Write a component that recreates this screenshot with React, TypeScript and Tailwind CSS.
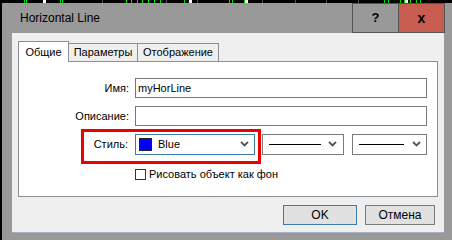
import React from "react";

const font = { fontFamily: '"Liberation Sans", Arial, sans-serif' };

function Chevron() {
  return (
    <svg width="9" height="6" viewBox="0 0 9 6" className="block">
      <path d="M1 1 L4.5 4.5 L8 1" stroke="#555" strokeWidth="1.8" fill="none" />
    </svg>
  );
}

function TopStrip() {
  const greens = [24, 26, 60, 62, 126, 131, 137, 142, 148, 154, 160, 184, 229, 232, 244, 384, 388, 400, 404, 410, 416, 420];
  const whites = [43, 189, 245, 405];
  const grays = [102, 166, 197, 262, 295, 326, 358];
  return (
    <svg width="452" height="3" className="block">
      <rect width="452" height="3" fill="#000" />
      {grays.map((x) => (
        <rect key={"g" + x} x={x} y={0} width={1} height={3} fill="#555" />
      ))}
      {greens.map((x) => (
        <rect key={"n" + x} x={x} y={0} width={1} height={3} fill="#00e000" />
      ))}
      {whites.map((x) => (
        <rect key={"w" + x} x={x} y={0} width={3} height={3} fill="#fff" />
      ))}
    </svg>
  );
}

export default function App() {
  return (
    <div className="w-[452px] h-[240px] overflow-hidden flex flex-col bg-[#999999] text-black" style={font}>
      <TopStrip />
      <div className="flex flex-1">
        <div className="w-[2px] bg-black" />
        <div className="flex-1 flex flex-col">
          {/* Title bar */}
          <div className="h-[30px] flex items-center">
            <div className="flex-1 pl-[18px] text-[12px]">Horizontal Line</div>
            <div className="w-[47px] h-[30px] border border-[#555] bg-[#999999] flex items-center justify-center text-[13px] font-bold">?</div>
            <div className="w-[46px] h-[30px] border border-[#555] border-l-0 bg-[#c75d51] flex items-center justify-center text-[14px] font-bold">x</div>
            <div className="w-[7px]" />
          </div>
          {/* Client area */}
          <div className="ml-[10px] w-[432px] h-[200px] bg-[#efefef] border-b border-[#a7b0c0] flex flex-col relative">
            {/* Tabs */}
            <div className="flex items-end pl-[6px] pt-[7px] h-[28px] text-[11px]">
              <div className="w-[51px] h-[21px] bg-white border border-b-0 border-[#8d8f98] flex items-start justify-center pt-[2px] relative z-10 -mb-px">Общие</div>
              <div className="w-[69px] h-[18px] border border-l-0 border-b-0 border-[#8d8f98] flex items-center justify-center">Параметры</div>
              <div className="w-[81px] h-[18px] border border-l-0 border-b-0 border-[#8d8f98] flex items-center justify-center">Отображение</div>
            </div>
            {/* Panel */}
            <div className="ml-[6px] w-[420px] h-[136px] bg-white border border-[#8d8f98] text-[11px] flex flex-col pt-[16px]">
              <div className="flex items-center h-[20px]">
                <div className="w-[116px] text-right pr-[6px]">Имя:</div>
                <div className="w-[292px] h-[20px] border border-[#777] flex items-center pl-[2px]">myHorLine</div>
              </div>
              <div className="flex items-center h-[20px] mt-[8px]">
                <div className="w-[116px] text-right pr-[6px]">Описание:</div>
                <div className="w-[292px] h-[20px] border border-[#777]" />
              </div>
              <div className="flex items-center h-[20px] mt-[8px]">
                <div className="w-[116px] text-right pr-[7px]">Стиль:</div>
                <div className="w-[120px] h-[21px] border border-[#3c7bad] flex items-center pl-[3px] pr-[5px]">
                  <div className="w-[13px] h-[13px] border border-[#222] bg-[#0000ff]" />
                  <div className="ml-[6px] flex-1">Blue</div>
                  <Chevron />
                </div>
                <div className="w-[82px] h-[21px] border border-[#7a7a7a] flex items-center pl-[6px] pr-[6px] ml-[7px]">
                  <div className="w-[52px] h-px bg-black" />
                  <div className="flex-1" />
                  <Chevron />
                </div>
                <div className="w-[75px] h-[21px] border border-[#7a7a7a] flex items-center pl-[6px] pr-[5px] ml-[8px]">
                  <div className="w-[45px] h-px bg-black" />
                  <div className="flex-1" />
                  <Chevron />
                </div>
              </div>
              <div className="flex items-center mt-[12px] pl-[116px]">
                <div className="w-[11px] h-[11px] border border-[#333] bg-white" />
                <div className="ml-[3px]">Рисовать объект как фон</div>
              </div>
            </div>
            {/* Buttons */}
            <div className="flex mt-[8px] pl-[271px] text-[12px]">
              <div className="w-[74px] h-[20px] border border-[#3c7bad] bg-[#e1e1e1] flex items-center justify-center">OK</div>
              <div className="w-[70px] h-[20px] border border-[#7a7a7a] bg-[#e1e1e1] flex items-center justify-center ml-[8px]">Отмена</div>
            </div>
            {/* Red highlight */}
            <div className="absolute left-[69px] top-[96px] w-[180px] h-[35px] border-[3px] border-[#ee0000]" />
          </div>
        </div>
      </div>
    </div>
  );
}
